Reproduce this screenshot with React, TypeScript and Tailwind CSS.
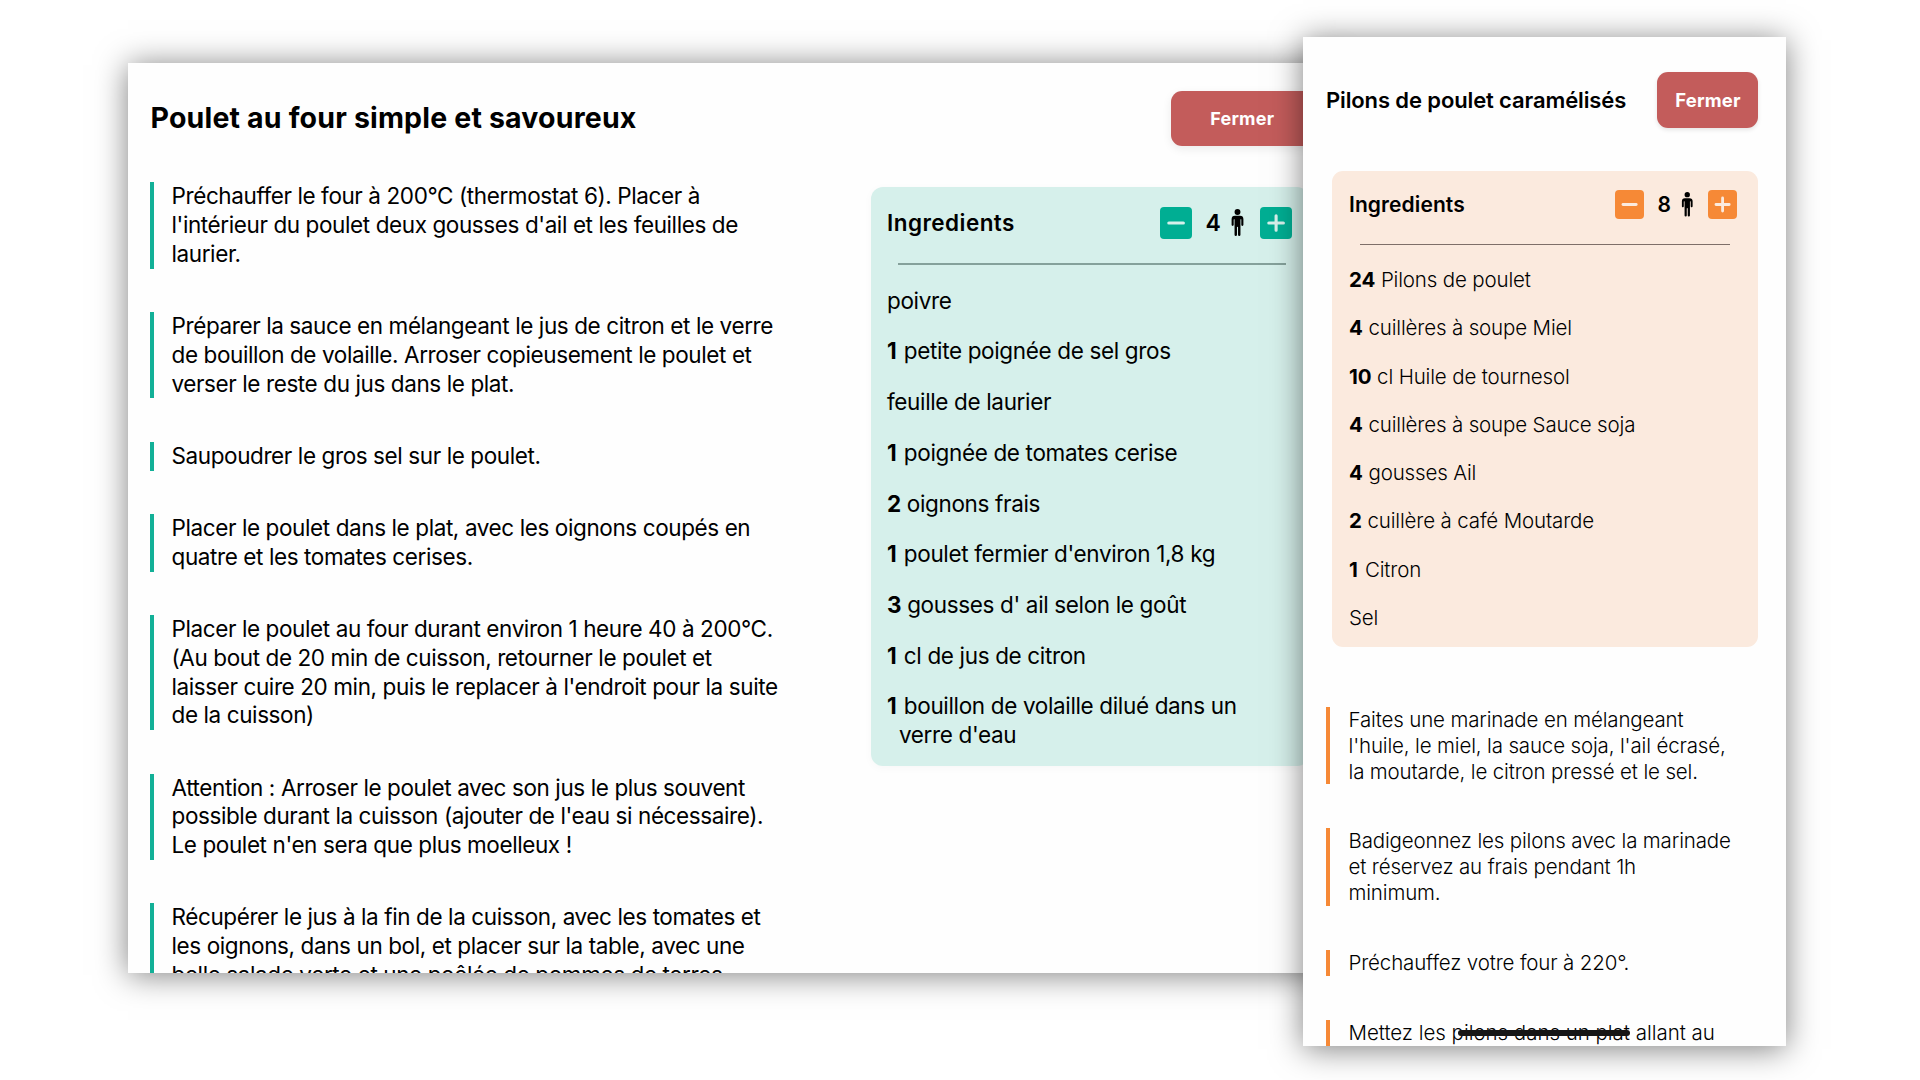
import { IoMan } from 'react-icons/io5';

type Ingredient = { qty?: string; label: string };

const chickenSteps: string[][] = [
  ['Préchauffer le four à 200°C (thermostat 6). Placer à', "l'intérieur du poulet deux gousses d'ail et les feuilles de", 'laurier.'],
  ['Préparer la sauce en mélangeant le jus de citron et le verre', 'de bouillon de volaille. Arroser copieusement le poulet et', 'verser le reste du jus dans le plat.'],
  ['Saupoudrer le gros sel sur le poulet.'],
  ['Placer le poulet dans le plat, avec les oignons coupés en', 'quatre et les tomates cerises.'],
  ['Placer le poulet au four durant environ 1 heure 40 à 200°C.', '(Au bout de 20 min de cuisson, retourner le poulet et', "laisser cuire 20 min, puis le replacer à l'endroit pour la suite", 'de la cuisson)'],
  ['Attention : Arroser le poulet avec son jus le plus souvent', "possible durant la cuisson (ajouter de l'eau si nécessaire).", "Le poulet n'en sera que plus moelleux !"],
  ['Récupérer le jus à la fin de la cuisson, avec les tomates et', 'les oignons, dans un bol, et placer sur la table, avec une', 'belle salade verte et une poêlée de pommes de terres.'],
];

const chickenIngredients: Ingredient[] = [
  { label: 'poivre' },
  { qty: '1', label: 'petite poignée de sel gros' },
  { label: 'feuille de laurier' },
  { qty: '1', label: 'poignée de tomates cerise' },
  { qty: '2', label: 'oignons frais' },
  { qty: '1', label: "poulet fermier d'environ 1,8 kg" },
  { qty: '3', label: "gousses d' ail selon le goût" },
  { qty: '1', label: 'cl de jus de citron' },
  { qty: '1', label: "bouillon de volaille dilué dans un verre d'eau" },
];

const drumstickIngredients: Ingredient[] = [
  { qty: '24', label: 'Pilons de poulet' },
  { qty: '4', label: 'cuillères à soupe Miel' },
  { qty: '10', label: 'cl Huile de tournesol' },
  { qty: '4', label: 'cuillères à soupe Sauce soja' },
  { qty: '4', label: 'gousses Ail' },
  { qty: '2', label: 'cuillère à café Moutarde' },
  { qty: '1', label: 'Citron' },
  { label: 'Sel' },
];

const drumstickSteps: string[][] = [
  ['Faites une marinade en mélangeant', "l'huile, le miel, la sauce soja, l'ail écrasé,", 'la moutarde, le citron pressé et le sel.'],
  ['Badigeonnez les pilons avec la marinade', 'et réservez au frais pendant 1h', 'minimum.'],
  ['Préchauffez votre four à 220°.'],
];

function Glyph({ plus, className }: { plus?: boolean; className: string }) {
  return (
    <svg viewBox="0 0 32 32" className={className} fill="none" stroke="currentColor" strokeWidth="3.1" strokeLinecap="round">
      <path d={plus ? 'M8.8 16h14.6M16.1 8.7v14.6' : 'M8.8 16h14.6'} />
    </svg>
  );
}

function Items({ items, className }: { items: Ingredient[]; className: string }) {
  return (
    <ul className={className}>
      {items.map((item) => (
        <li key={item.label} className="pl-3 -indent-3">
          {item.qty && <span className={item.qty === '1' ? 'mr-[2.5px] font-bold' : 'mr-[1px] font-bold'}>{item.qty} </span>}
          {item.label}
        </li>
      ))}
    </ul>
  );
}

function ChickenRecipe() {
  return (
    <section className="mt-[63px] ml-32 h-[910px] w-[1208px] shrink-0 overflow-hidden bg-[#fefefe] pt-7 pr-[22px] pl-[22px] shadow-[0_2px_30px_rgba(0,0,0,0.5)]">
      <header className="flex h-[55px] items-center justify-between">
        <h1 className="ml-[0.5px] text-[28.5px] font-bold tracking-[0.18px] whitespace-nowrap">Poulet au four simple et savoureux</h1>
        <button className="mr-[0.5px] flex h-[55px] w-[142.5px] items-center justify-center rounded-[11px] bg-[#c35c5b] pb-px text-[18px] font-bold tracking-[0.2px] text-white shadow-[0_3px_10px_rgba(0,0,0,0.08)]">
          Fermer
        </button>
      </header>
      <div className="flex items-start">
        <ol className="mt-[36.3px] flex w-[721px] shrink-0 flex-col gap-[43.5px]">
          {chickenSteps.map((lines) => (
            <li key={lines[0]} className="border-l-4 border-[#12b097] pl-[17.5px] text-[22.5px] leading-[28.75px] font-[380] tracking-[-0.4px] whitespace-nowrap">
              {lines.map((line) => (
                <span key={line} className="block">{line}</span>
              ))}
            </li>
          ))}
        </ol>
        <aside className="mt-[41px] h-[579px] w-[438px] shrink-0 rounded-[12px] bg-[#d6f0eb] px-4 pt-[19.5px] shadow-[0_2px_10px_rgba(0,0,0,0.03)]">
          <div className="flex h-8 w-[405px] items-center">
            <h2 className="text-[22.5px] font-semibold tracking-[0.45px]">Ingredients</h2>
            <button className="ml-auto rounded-[4px] bg-[#00ae93] text-[#d6f0eb]"><Glyph className="size-8" /></button>
            <span className="w-[43px] pt-px pl-[14px] text-[23px] font-semibold">4</span>
            <IoMan className="-ml-[10.5px] size-[27px]" />
            <button className="ml-[9px] rounded-[4px] bg-[#00ae93] text-[#d6f0eb]"><Glyph plus className="size-8" /></button>
          </div>
          <div className="mt-6 ml-[11px] h-[2px] w-[388px] bg-[#85a19b]" />
          <Items items={chickenIngredients} className="mt-[22.3px] flex w-[370px] flex-col gap-[21.95px] text-[22.5px] leading-[28.75px] font-[380] tracking-[-0.35px]" />
        </aside>
      </div>
    </section>
  );
}

function DrumstickRecipe() {
  return (
    <section className="relative mt-[37px] -ml-[33px] h-[1009px] w-[483px] shrink-0 overflow-hidden bg-[#fefefe] pt-[35px] pl-[23px] shadow-[0_3px_30px_rgba(0,0,0,0.5)]">
      <header className="flex h-14 w-[432px] items-center justify-between">
        <h1 className="text-[22px] font-semibold tracking-[-0.12px] whitespace-nowrap">Pilons de poulet caramélisés</h1>
        <button className="flex h-14 w-[101px] items-center justify-center rounded-[11px] bg-[#c35c5b] pt-px pl-px text-[18.5px] font-bold tracking-[0.2px] text-white shadow-[0_2px_4px_rgba(0,0,0,0.1)]">
          Fermer
        </button>
      </header>
      <aside className="mt-[43px] ml-[6px] h-[476px] w-[426px] rounded-[11px] bg-[#fbeade] px-[17px] pt-[19px]">
        <div className="flex h-[29px] w-[388px] items-center">
          <h2 className="text-[21px] font-semibold tracking-[0.1px]">Ingredients</h2>
          <button className="ml-auto rounded-[4px] bg-[#f68936] text-[#fbeade]"><Glyph className="size-[29px]" /></button>
          <span className="w-[38px] pl-[13.5px] text-[21px] font-semibold">8</span>
          <IoMan className="-ml-[7px] size-[24.5px]" />
          <button className="ml-[8.5px] rounded-[4px] bg-[#f68936] text-[#fbeade]"><Glyph plus className="size-[29px]" /></button>
        </div>
        <div className="mt-[24.5px] ml-[11px] h-[1.5px] w-[370px] bg-[#7e6f69]" />
        <Items items={drumstickIngredients} className="mt-[22px] flex flex-col gap-[22.5px] text-[20.5px] leading-[25.75px] font-[350] tracking-[-0.15px]" />
      </aside>
      <ol className="mt-[60px] flex flex-col gap-[44.2px] text-[20.5px] leading-[25.75px] font-[350] tracking-[-0.15px] whitespace-nowrap">
        {drumstickSteps.map((lines) => (
          <li key={lines[0]} className="border-l-4 border-[#f68936] pl-[18.5px]">
            {lines.map((line) => (
              <span key={line} className="block">{line}</span>
            ))}
          </li>
        ))}
        <li className="border-l-4 border-[#f68936] pb-8 pl-[18.5px] tracking-[-0.03px]">
          Mettez les{' '}
          <span className="relative">
            pilons dans un plat
            <span className="absolute top-[10.5px] right-0 left-[6px] h-[5.5px] rounded-full bg-[#161616]" />
          </span>{' '}
          allant au
        </li>
      </ol>
    </section>
  );
}

export default function App() {
  return (
    <main className="flex h-[1080px] w-[1920px] items-start overflow-hidden bg-white font-['Inter',sans-serif] text-black">
      <ChickenRecipe />
      <DrumstickRecipe />
    </main>
  );
}
